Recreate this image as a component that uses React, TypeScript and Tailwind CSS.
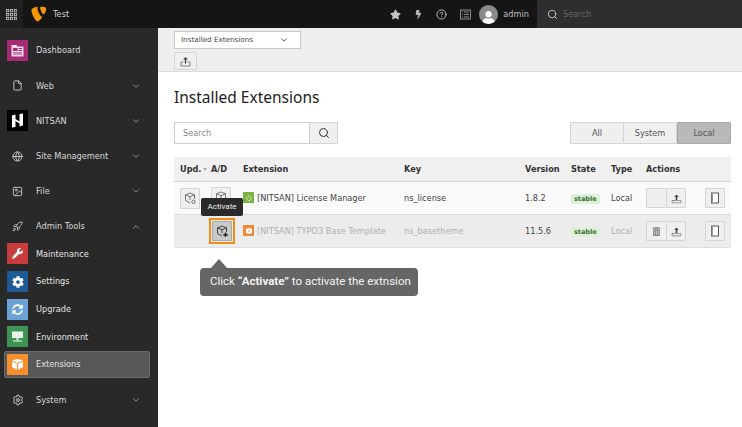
import React from "react";
import { ChevronDown, ChevronUp, Search, CircleHelp, File, Globe, Image, Rocket, Settings } from "lucide-react";
import { FaStar, FaBolt, FaUser, FaWrench, FaCog, FaSyncAlt, FaTrashAlt } from "react-icons/fa";

const verdana = "font-['DejaVu_Sans',sans-serif]";

function Grid() {
  return (
    <svg width="11" height="11" viewBox="0 0 11 11" fill="none" stroke="#c8c8c8" strokeWidth="0.8">
      {[0, 4, 8].map((y) => [0, 4, 8].map((x) => <rect key={`${x}-${y}`} x={x + 0.4} y={y + 0.4} width="2.4" height="2.4" />))}
    </svg>
  );
}

function Typo3() {
  return (
    <svg width="16" height="16" viewBox="0 0 16 16">
      <path d="M11.6 10.6c-.2.1-.4.1-.6.1-1.900 0-4.600-6.500-4.600-8.700 0-.8.2-1.100.5-1.300C4.600.9 1.700 1.800.8 2.900c-.2.300-.3.700-.3 1.300 0 3.400 3.600 11.200 6.200 11.200 1.200 0 3.200-2 4.900-4.800zM10.400.7c2.400 0 4.800.4 4.800 1.700 0 2.700-1.700 5.900-2.600 5.900-1.500 0-3.400-4.500-3.400-6.700C9.200.700 9.600.7 10.400.7z" fill="#f49700" />
    </svg>
  );
}

function DashIcon() {
  return (
    <svg width="13" height="13" viewBox="0 0 13 13">
      <path d="M0.500 1h5l1 1.500h6V12.500H0.500z" fill="#f3dbe9" />
      <rect x="2" y="4" width="4.500" height="3" fill="#a62a71" />
      <rect x="7.500" y="4" width="3.500" height="1" fill="#a62a71" />
      <rect x="7.500" y="6" width="3.500" height="1" fill="#a62a71" />
      <rect x="2" y="8.500" width="9" height="1" fill="#a62a71" />
      <rect x="2" y="10.300" width="9" height="0.800" fill="#c77aa6" />
    </svg>
  );
}

function NitsanIcon() {
  return (
    <svg width="13" height="15" viewBox="0 0 13 15">
      <path d="M1 2.500 4.500 1.500V6L8.500 8.500V1L12 0.500V12.500L8.500 13.500V10.500L4.500 8V14L1 14.500z" fill="#fff" />
    </svg>
  );
}

function EnvIcon() {
  return (
    <svg width="13" height="13" viewBox="0 0 13 13">
      <rect x="1" y="1.500" width="11" height="6.500" fill="#e6f3e8" />
      <rect x="5.500" y="8" width="2" height="2.500" fill="#e6f3e8" />
      <rect x="2" y="10.500" width="9" height="1" fill="#e6f3e8" />
    </svg>
  );
}

function ExtIcon() {
  return (
    <svg width="13" height="13" viewBox="0 0 13 13">
      <path d="M1 2.500 6.500 1 12 2.500V9L6.500 12 1 9z" fill="#fff" />
      <path d="M1 3 6.500 5.500 12 3M6.500 5.500V12" stroke="#f6902f" strokeWidth="1" fill="none" />
    </svg>
  );
}

function ExtSmall() {
  return (
    <svg width="8" height="8" viewBox="0 0 8 8">
      <path d="M1 2 4 1 7 2V6L4 7 1 6z" fill="#fff" />
      <path d="M3.500 3H4.500V5H3.500z" fill="#f08a35" />
    </svg>
  );
}

function PowerSmall() {
  return (
    <svg width="8" height="8" viewBox="0 0 8 8" fill="none" stroke="#d8ecc0" strokeWidth="0.8">
      <path d="M2.400 2.400a2.400 2.400 0 1 0 3.200 0M4 1v2.800" />
    </svg>
  );
}

function PackageBadge({ plus, color = "#555" }: { plus?: boolean; color?: string }) {
  return (
    <svg width="13" height="13" viewBox="0 0 13 13" fill="none" stroke={color} strokeWidth="0.9">
      <path d="M6 1 10.500 2.800V7M6 1 1.500 2.800V8.500L6 11M1.500 2.800 6 4.700 10.500 2.800M6 4.700V8" />
      {plus ? (
        <path d="M9.500 7.500V12M7.300 9.800H11.800" stroke="#222" strokeWidth="1.400" />
      ) : (
        <circle cx="9.500" cy="9.800" r="1.700" />
      )}
    </svg>
  );
}

function DownloadIcon() {
  return (
    <svg width="11" height="11" viewBox="0 0 11 11">
      <path d="M5.500 1.500 7.800 4H6.300V7H4.700V4H3.200z" fill="#444" />
      <path d="M1 7.500H3.500M7.500 7.500H10V9.800H1V7.500z" fill="none" stroke="#777" strokeWidth="0.700" />
    </svg>
  );
}

function UploadIcon() {
  return (
    <svg width="11" height="11" viewBox="0 0 11 11">
      <path d="M5.500 1 8 3.500H6.200V7.500H4.800V3.500H3z" fill="#444" />
      <path d="M3.500 6H1V10H10V6H7.500" fill="none" stroke="#555" strokeWidth="0.700" />
    </svg>
  );
}

function DocIcon() {
  return (
    <svg width="10" height="12" viewBox="0 0 10 12">
      <rect x="1.500" y="1" width="7" height="10" fill="#fff" stroke="#444" strokeWidth="0.900" />
      <rect x="1.500" y="1" width="1.500" height="10" fill="#999" />
    </svg>
  );
}

function ListIcon() {
  return (
    <svg width="11" height="11" viewBox="0 0 11 11" fill="none" stroke="#aaa" strokeWidth="0.800">
      <rect x="0.500" y="1" width="10" height="9" />
      <path d="M2 3H3M4 3H9M2 5.500H3M4 5.500H9M2 8H3M4 8H9" />
    </svg>
  );
}

function MenuRow({ icon, label, open, chevron = true, tile }: { icon: React.ReactNode; label: string; open?: boolean; chevron?: boolean; tile?: string }) {
  return (
    <div className="h-[35.200px] flex items-center pl-[7px] pr-[17px]">
      <div className={`w-[21px] h-[21px] flex items-center justify-center ${tile ?? ""}`}>{icon}</div>
      <span className="ml-[8px] flex-1 text-[8.200px] font-medium text-[#d8d8d8]">{label}</span>
      {chevron && (open ? <ChevronUp size={10} color="#aaa" /> : <ChevronDown size={10} color="#aaa" />)}
    </div>
  );
}

function SubRow({ icon, label, tile, active }: { icon: React.ReactNode; label: string; tile: string; active?: boolean }) {
  return (
    <div className={`h-[27.600px] flex items-center ${active ? "bg-[#585858] border border-[#6a6a6a] rounded-[2px] ml-[4px] mr-[8px] pl-[2px]" : "pl-[7px]"}`}>
      <div className={`w-[21px] h-[21px] flex items-center justify-center ${tile}`}>{icon}</div>
      <span className="ml-[8px] text-[8.200px] font-medium text-[#e4e4e4]">{label}</span>
    </div>
  );
}

function Sidebar() {
  return (
    <aside className={`w-[158px] shrink-0 bg-[#292929] pt-[5px] ${verdana}`}>
      <MenuRow chevron={false} label="Dashboard" tile="bg-[#a62a71]" icon={<DashIcon />} />
      <MenuRow label="Web" icon={<File size={11} color="#ccc" />} />
      <MenuRow label="NITSAN" tile="bg-black" icon={<NitsanIcon />} />
      <MenuRow label="Site Management" icon={<Globe size={11} color="#ccc" />} />
      <MenuRow label="File" icon={<Image size={11} color="#ccc" />} />
      <MenuRow label="Admin Tools" open icon={<Rocket size={11} color="#bbb" />} />
      <div className="-mt-[4px]">
        <SubRow label="Maintenance" tile="bg-[#c83c3c]" icon={<FaWrench size={11} color="#fff" />} />
        <SubRow label="Settings" tile="bg-[#1d5a96]" icon={<FaCog size={12} color="#fff" />} />
        <SubRow label="Upgrade" tile="bg-[#6ba3d8]" icon={<FaSyncAlt size={11} color="#fff" />} />
        <SubRow label="Environment" tile="bg-[#3f9455]" icon={<EnvIcon />} />
        <SubRow active label="Extensions" tile="bg-[#f6902f]" icon={<ExtIcon />} />
      </div>
      <div className="mt-[4px]">
        <MenuRow label="System" icon={<Settings size={12} color="#ccc" />} />
      </div>
    </aside>
  );
}

function TopBar() {
  return (
    <header className="h-[28px] bg-[#151515] flex items-center">
      <div className="w-[23px] h-full bg-[#202020] flex items-center justify-center"><Grid /></div>
      <div className="ml-[8px]"><Typo3 /></div>
      <span className={`ml-[6px] text-[8.200px] text-[#cfcfcf] ${verdana}`}>Test</span>
      <div className="ml-auto flex items-center h-full">
        <div className="flex items-center gap-[13px] mr-[8px]">
          <FaStar size={11} color="#c4c4c4" />
          <FaBolt size={9} color="#b4b4b4" />
          <CircleHelp size={11} color="#c4c4c4" />
          <ListIcon />
        </div>
        <div className="w-[19px] h-[19px] rounded-full bg-[#8a8a8a] flex items-end justify-center overflow-hidden"><FaUser size={13} color="#fff" /></div>
        <span className={`ml-[5px] mr-[8px] text-[8.200px] text-[#bdbdbd] ${verdana}`}>admin</span>
        <div className="w-[205px] h-full bg-[#2e2e2e] flex items-center pl-[10px]">
          <Search size={11} color="#d0d0d0" />
          <span className={`ml-[5px] text-[8.200px] text-[#666] ${verdana}`}>Search</span>
        </div>
      </div>
    </header>
  );
}

function Btn({ children, className = "", bg = "bg-[#efefef] border-[#d5d5d5]" }: { children?: React.ReactNode; className?: string; bg?: string }) {
  return <div className={`flex items-center justify-center border rounded-[1px] ${bg} ${className}`}>{children}</div>;
}

function Actions({ trash }: { trash?: boolean }) {
  return (
    <div className="flex">
      <Btn className="w-[20px] h-[20px] border-r-0">{trash && <FaTrashAlt size={9} color="#888" />}</Btn>
      <Btn className="w-[20px] h-[20px]"><DownloadIcon /></Btn>
      <div className="w-[19px]" />
      <Btn className="w-[20px] h-[20px]"><DocIcon /></Btn>
    </div>
  );
}

function Row({ upd, ad, badge, name, extKey, version, trash, dim }: { upd?: React.ReactNode; ad: React.ReactNode; badge: React.ReactNode; name: string; extKey: string; version: string; trash?: boolean; dim?: boolean }) {
  const muted = dim ? "text-[#b0b0b0]" : "text-[#444]";
  return (
    <div className={`h-[33px] flex items-center border-b border-[#dedede] text-[8.200px] ${dim ? "bg-[#ececec]" : "bg-[#fafafa]"}`}>
      <div className="w-[36px] pl-[6px]">{upd}</div>
      <div className="w-[33px] pl-[1px] flex">{ad}</div>
      <div className="w-[161px] flex items-center">{badge}<span className={`ml-[3px] ${muted}`}>{name}</span></div>
      <div className={`w-[121px] ${muted}`}>{extKey}</div>
      <div className="w-[46px] text-[#444]">{version}</div>
      <div className="w-[40px]"><span className="bg-[#dff0d8] text-[#3c6e3c] font-bold text-[6.500px] px-[3px] py-[1px] rounded-[1px]">stable</span></div>
      <div className={`w-[35px] ${muted}`}>Local</div>
      <Actions trash={trash} />
    </div>
  );
}

function Main() {
  return (
    <main className={`flex-1 bg-white min-w-0 ${verdana}`}>
      <div className="h-[44px] bg-[#eeeeee] border-b border-[#dcdcdc] pl-[16px] pt-[3px] flex flex-col gap-[3px]">
        <div className="w-[127px] h-[18px] bg-white border border-[#c8c8c8] flex items-center pl-[6px] pr-[11px] justify-between text-[7.200px] text-[#444]">
          Installed Extensions <ChevronDown size={10} color="#333" />
        </div>
        <Btn className="w-[23px] h-[18px]"><UploadIcon /></Btn>
      </div>
      <div className="pl-[16px] pr-[11px]">
        <h1 className="mt-[14px] h-[23px] leading-[23px] text-[15.500px] text-[#222] font-['Noto_Sans',sans-serif]">Installed Extensions</h1>
        <div className="mt-[13px] flex items-center justify-between">
          <div className="flex h-[22px]">
            <div className="w-[136px] border border-[#cfcfcf] bg-white text-[8.200px] text-[#888] flex items-center pl-[8px]">Search</div>
            <Btn className="w-[28px] border-l-0"><Search size={12} color="#333" /></Btn>
          </div>
          <div className="flex h-[22px] text-[8.200px] text-[#555]">
            <Btn className="w-[54px]">All</Btn>
            <Btn className="w-[53px] border-l-0">System</Btn>
            <Btn className="w-[54px]" bg="bg-[#b9b9b9] border-[#a8a8a8]">Local</Btn>
          </div>
        </div>
        <div className="relative mt-[13px] w-[557px]">
          <div className="h-[25px] bg-[#f0f0f0] border-b border-[#d2d2d2] flex items-center font-bold text-[8.200px] text-[#333]">
            <div className="w-[36px] pl-[6px] flex items-center">Upd.<span className="ml-[2px] text-[6px] font-normal text-[#999]">▾</span></div>
            <div className="w-[33px] pl-[1px]">A/D</div>
            <div className="w-[161px]">Extension</div>
            <div className="w-[121px]">Key</div>
            <div className="w-[46px]">Version</div>
            <div className="w-[40px]">State</div>
            <div className="w-[35px]">Type</div>
            <div>Actions</div>
          </div>
          <Row
            upd={<Btn className="w-[20px] h-[21px]"><PackageBadge color="#666" /></Btn>}
            ad={<Btn className="w-[20px] h-[21px] -mt-[1px]"><PackageBadge color="#666" /></Btn>}
            badge={<div className="w-[11px] h-[11px] bg-[#7cb342] flex items-center justify-center"><PowerSmall /></div>}
            name="[NITSAN] License Manager"
            extKey="ns_license"
            version="1.8.2"
          />
          <Row
            dim
            trash
            ad={<div className="border-[2px] border-[#f28c13] p-[1px] -ml-[2px]"><Btn className="w-[20px] h-[20px]" bg="bg-[#c9c9c9] border-[#a8a8a8]"><PackageBadge plus color="#333" /></Btn></div>}
            badge={<div className="w-[11px] h-[11px] bg-[#f08a35] flex items-center justify-center"><ExtSmall /></div>}
            name="[NITSAN] TYPO3 Base Template"
            extKey="ns_basetheme"
            version="11.5.6"
          />
          <div className="absolute left-[27px] top-[41px] w-[42px] h-[18px] bg-[#2a2a2a] rounded-[2px] flex items-center justify-center text-[8px] text-[#eee] font-['Roboto',sans-serif]">Activate</div>
          <div className="absolute left-[26px] top-[102px] flex flex-col">
            <div className="ml-[11px] w-0 h-0 border-x-[8px] border-x-transparent border-b-[9px] border-b-[#666]" />
            <div className="w-[218px] h-[28px] bg-[#666] rounded-[4px] flex items-center pl-[10px] text-[11.500px] text-[#f4f4f4] whitespace-nowrap font-['Roboto',sans-serif]">
              <span>Click <b>“Activate”</b> to activate the extnsion</span>
            </div>
          </div>
        </div>
      </div>
    </main>
  );
}

export default function App() {
  return (
    <div className="w-[742px] h-[427px] overflow-hidden flex flex-col bg-white">
      <TopBar />
      <div className="flex flex-1 min-h-0">
        <Sidebar />
        <Main />
      </div>
    </div>
  );
}
